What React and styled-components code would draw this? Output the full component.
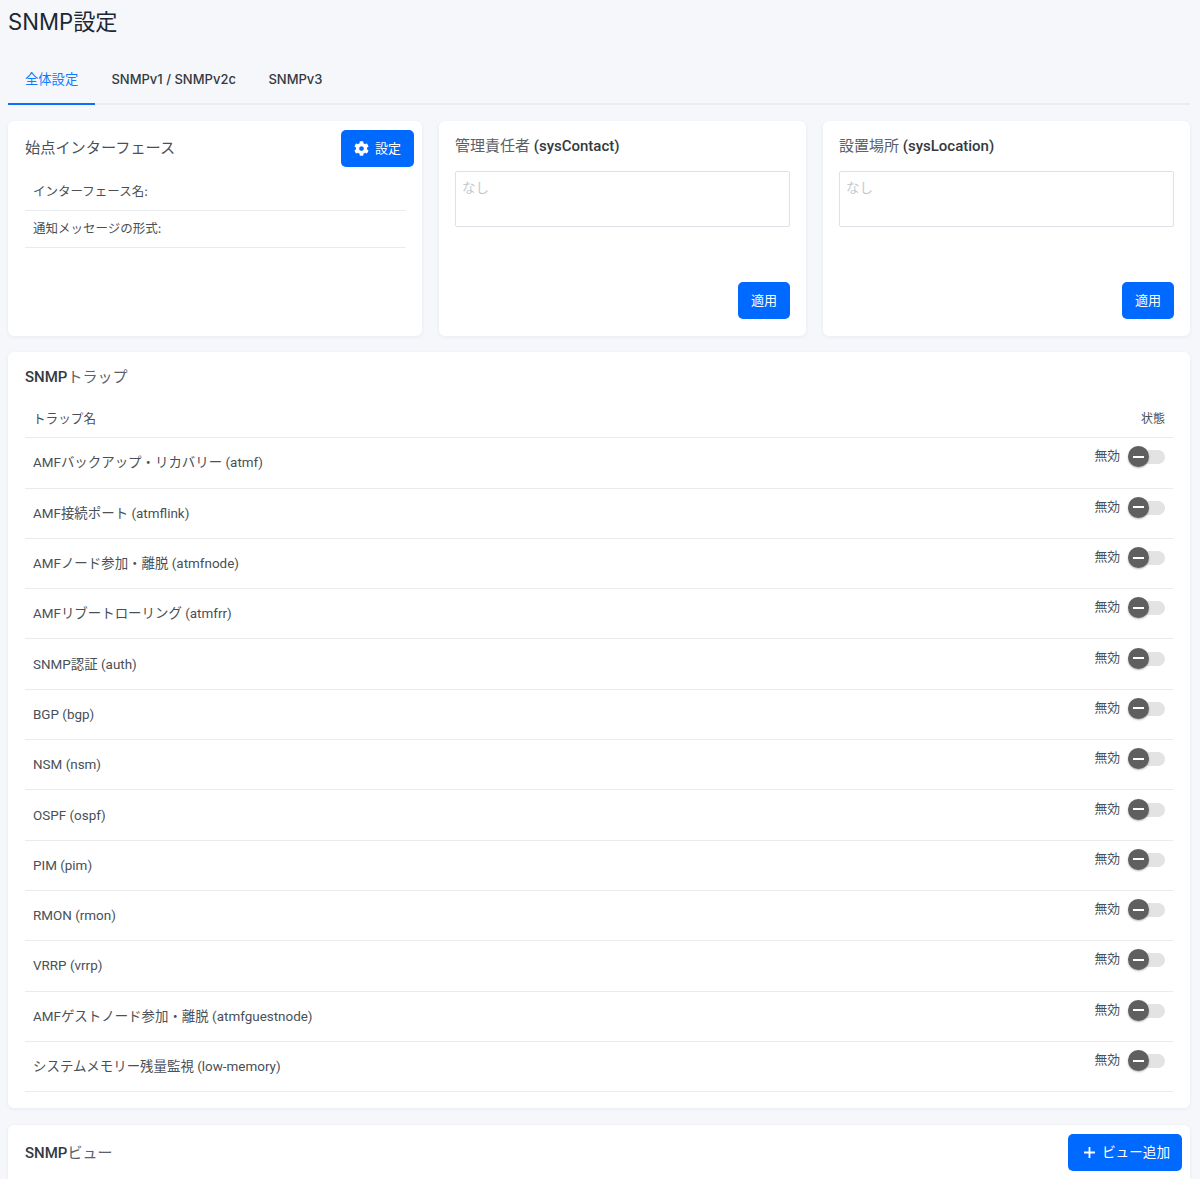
import React from 'react'
import styled, { createGlobalStyle } from 'styled-components'
import { FaCog } from 'react-icons/fa'

const GlobalStyle = createGlobalStyle`
  html, body { margin: 0; padding: 0; }
  body {
    background: #f6f7fb;
    font-family: Inter, "Noto Sans CJK JP", sans-serif;
    color: #495057;
    overflow: hidden;
  }
`

const Page = styled.div`
  height: 1179px;
  overflow: hidden;
  padding: 0 10px 0 8px;
`
const PageTitle = styled.h1`
  margin: 0;
  height: 45px;
  line-height: 43px;
  font-size: 22.2px;
  font-weight: 400;
  color: #1c2733;
`
const Tabs = styled.div`
  display: flex;
  height: 60px;
  margin-bottom: 16px;
  box-sizing: border-box;
  border-bottom: 2px solid #e9ecf1;
`
const Tab = styled.div`
  padding: ${p => (p.$active ? '8px 17px 0' : '9px 16.25px 0')};
  height: 60px;
  box-sizing: border-box;
  display: flex;
  align-items: center;
  font-size: ${p => (p.$active ? '13.3px' : '13px')};
  font-weight: ${p => (p.$active ? 400 : 500)};
  color: ${p => (p.$active ? '#0d7dff' : '#343a40')};
  border-bottom: 2px solid ${p => (p.$active ? '#0d6efd' : 'transparent')};
`
const TopRow = styled.div`
  display: grid;
  grid-template-columns: 414px 1fr 1fr;
  gap: 17px;
  margin-bottom: 16px;
`
const Card = styled.section`
  background: #fff;
  border-radius: 6px;
  box-shadow: 0 1px 4px rgba(30, 40, 60, 0.06);
  box-sizing: border-box;
`
const SourceCard = styled(Card)`
  height: 215px;
  padding: 8.5px 8px 0 17px;
`
const SourceHead = styled.div`
  display: flex;
  align-items: center;
  justify-content: space-between;
  height: 37px;
  margin-bottom: 7.6px;
`
const CardTitle = styled.h2`
  margin: 0;
  padding-bottom: 5px;
  font-size: 15.2px;
  font-weight: 400;
  color: #495057;
`
const PrimaryButton = styled.button`
  display: inline-flex;
  align-items: center;
  justify-content: center;
  gap: 6px;
  height: 37px;
  padding: 0 13px 2px;
  border: 0;
  border-radius: 5px;
  background: #0069ff;
  color: #fff;
  font-family: inherit;
  font-size: 13px;
  svg { flex: none; margin-top: 2px; }
`
const AddButton = styled(PrimaryButton)`
  gap: 7px;
  padding: 0 12px 2px 16px;
  font-size: 13.6px;
`
const InfoList = styled.div`
  margin-right: 8px;
`
const InfoRow = styled.div`
  height: 36.8px;
  box-sizing: border-box;
  display: flex;
  align-items: center;
  padding: 0 0 3px 8px;
  font-size: 12.5px;
  color: #495057;
  border-bottom: 1px solid #e9ecef;
`
const FieldCard = styled(Card)`
  height: 215px;
  padding: 0 16px 17px;
  display: flex;
  flex-direction: column;
`
const FieldTitle = styled.h2`
  margin: 0;
  height: 50px;
  line-height: 50px;
  font-family: Roboto, "Noto Sans CJK JP", sans-serif;
  font-size: 15px;
  font-weight: 400;
  color: #5a6168;
`
const Latin = styled.span`
  font-weight: 500;
  color: #343a40;
`
const FieldBox = styled.textarea`
  display: block;
  width: 100%;
  height: 56px;
  box-sizing: border-box;
  padding: 7px 6px;
  border: 1px solid #dee2e6;
  border-radius: 2px;
  resize: none;
  outline: none;
  font-family: inherit;
  font-size: 13.5px;
  line-height: 18px;
  &::placeholder { color: #c4c9cf; opacity: 1; }
`
const FieldFoot = styled.div`
  margin-top: auto;
  display: flex;
  justify-content: flex-end;
`
const TrapCard = styled(Card)`
  height: 756px;
  padding: 0 17px;
  margin-bottom: 17px;
`
const TrapTitle = styled.h2`
  margin: 0;
  height: 48px;
  line-height: 50px;
  font-family: Roboto, "Noto Sans CJK JP", sans-serif;
  font-size: 15px;
  font-weight: 400;
  color: #5a6168;
`
const TrapHead = styled.div`
  display: flex;
  align-items: center;
  justify-content: space-between;
  height: 38.3px;
  box-sizing: border-box;
  padding: 0 8px 3px;
  font-size: 12.6px;
  color: #495057;
  border-bottom: 1px solid #e9ecef;
`
const SmallLabel = styled.span`
  font-size: 12px;
`
const TrapRow = styled.div`
  display: flex;
  align-items: center;
  justify-content: space-between;
  height: 50.31px;
  box-sizing: border-box;
  padding: 1px 8px 0;
  font-family: Roboto, "Noto Sans CJK JP", sans-serif;
  font-size: 13.45px;
  line-height: 20px;
  color: #495057;
  border-bottom: 1px solid #e9ecef;
`
const StateWrap = styled.div`
  display: flex;
  align-items: center;
  gap: 8px;
  margin-top: -12px;
  font-size: 12.8px;
`
const StateText = styled.span`
  position: relative;
  top: -1px;
`
const SwitchTrack = styled.div`
  position: relative;
  width: 37px;
  height: 14px;
  border-radius: 7px;
  background: #e3e3e3;
`
const SwitchKnob = styled.div`
  position: absolute;
  left: 0;
  top: -4px;
  width: 21px;
  height: 21px;
  border-radius: 50%;
  background: #5f5f5f;
  box-shadow: 0 1px 2px rgba(0, 0, 0, 0.3);
  &::after {
    content: '';
    position: absolute;
    left: 5px;
    right: 5px;
    top: 9.5px;
    height: 2px;
    background: #fff;
  }
`
const ViewCard = styled(Card)`
  height: 60px;
  padding: 0 8px 0 17px;
  border-radius: 6px 6px 0 0;
`
const ViewHead = styled.div`
  display: flex;
  align-items: center;
  justify-content: space-between;
  height: 54px;
`

const traps = [
  'AMFバックアップ・リカバリー (atmf)',
  'AMF接続ポート (atmflink)',
  'AMFノード参加・離脱 (atmfnode)',
  'AMFリブートローリング (atmfrr)',
  'SNMP認証 (auth)',
  'BGP (bgp)',
  'NSM (nsm)',
  'OSPF (ospf)',
  'PIM (pim)',
  'RMON (rmon)',
  'VRRP (vrrp)',
  'AMFゲストノード参加・離脱 (atmfguestnode)',
  'システムメモリー残量監視 (low-memory)',
]

const App = () => {
  return (
    <>
      <GlobalStyle />
      <Page>
        <PageTitle>SNMP設定</PageTitle>
        <Tabs>
          <Tab $active>全体設定</Tab>
          <Tab>SNMPv1 / SNMPv2c</Tab>
          <Tab>SNMPv3</Tab>
        </Tabs>
        <TopRow>
          <SourceCard>
            <SourceHead>
              <CardTitle>始点インターフェース</CardTitle>
              <PrimaryButton><FaCog size={15} /> 設定</PrimaryButton>
            </SourceHead>
            <InfoList>
              <InfoRow>インターフェース名:</InfoRow>
              <InfoRow>通知メッセージの形式:</InfoRow>
            </InfoList>
          </SourceCard>
          <FieldCard>
            <FieldTitle>管理責任者 <Latin>(sysContact)</Latin></FieldTitle>
            <FieldBox placeholder="なし" />
            <FieldFoot><PrimaryButton>適用</PrimaryButton></FieldFoot>
          </FieldCard>
          <FieldCard>
            <FieldTitle>設置場所 <Latin>(sysLocation)</Latin></FieldTitle>
            <FieldBox placeholder="なし" />
            <FieldFoot><PrimaryButton>適用</PrimaryButton></FieldFoot>
          </FieldCard>
        </TopRow>
        <TrapCard>
          <TrapTitle><Latin>SNMP</Latin>トラップ</TrapTitle>
          <TrapHead>
            <span>トラップ名</span>
            <SmallLabel>状態</SmallLabel>
          </TrapHead>
          {traps.map(name => (
            <TrapRow key={name}>
              <span>{name}</span>
              <StateWrap>
                <StateText>無効</StateText>
                <SwitchTrack><SwitchKnob /></SwitchTrack>
              </StateWrap>
            </TrapRow>
          ))}
        </TrapCard>
        <ViewCard>
          <ViewHead>
            <TrapTitle><Latin>SNMP</Latin>ビュー</TrapTitle>
            <AddButton>
              <svg width="11" height="11" viewBox="0 0 11 11"><path d="M5.5 0v11M0 5.5h11" stroke="#fff" strokeWidth="1.8" fill="none" /></svg>
              ビュー追加
            </AddButton>
          </ViewHead>
        </ViewCard>
      </Page>
    </>
  )
}

export default App
